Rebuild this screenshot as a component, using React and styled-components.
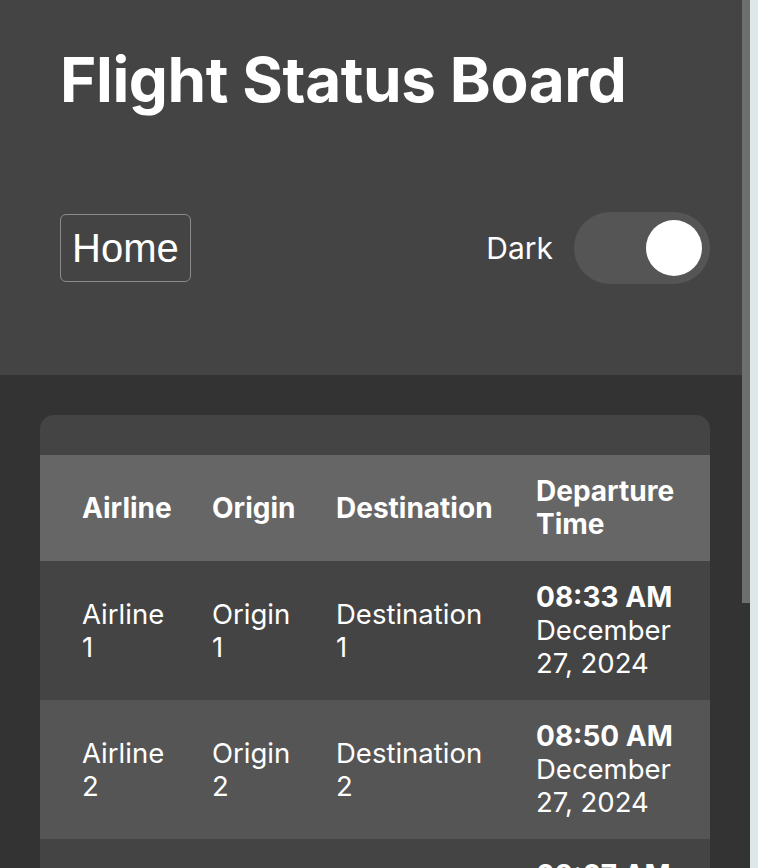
import { useEffect, useRef, useState } from "react";
import styled, { createGlobalStyle } from "styled-components";

const GlobalStyle = createGlobalStyle`
  html, body {
    margin: 0;
    padding: 0;
    background-color: #333333;
  }
  body {
    font-family: Inter, "Noto Sans", sans-serif;
    color: #fff;
  }
`;

const Page = styled.div`
  display: flex;
  height: 100vh;
  overflow: hidden;
`;

const Content = styled.div`
  flex: 1;
  min-width: 0;
  overflow-y: auto;
  scrollbar-width: none;
  &::-webkit-scrollbar {
    display: none;
  }
`;

const ScrollRail = styled.div`
  display: flex;
  width: 16px;
  flex-shrink: 0;
  background: linear-gradient(90deg, #333333 8px, #dfe6ea 8px);
`;

const ScrollThumb = styled.div`
  width: 8px;
  background-color: #6e6e6e;
`;

const Header = styled.header`
  background-color: #444444;
  padding: 41px 32px 91px 60px;
`;

const Title = styled.h1`
  margin: 0 0 94px;
  font-size: 62px;
  font-weight: 700;
  line-height: 77px;
  letter-spacing: -0.4px;
`;

const Nav = styled.nav`
  display: flex;
  align-items: center;
  justify-content: space-between;
`;

const HomeButton = styled.button`
  font-family: "Liberation Sans", Arial, sans-serif;
  font-size: 40px;
  color: #fff;
  background: transparent;
  border: 1px solid #8a8a8a;
  border-radius: 6px;
  padding: 9px 11px;
  line-height: 48px;
  cursor: pointer;
`;

const ThemeSwitch = styled.label`
  display: flex;
  align-items: center;
  gap: 21px;
  font-size: 30px;
  cursor: pointer;
`;

const Track = styled.span`
  display: flex;
  justify-content: ${(p) => (p.$on ? "flex-end" : "flex-start")};
  align-items: center;
  width: 136px;
  height: 72px;
  box-sizing: border-box;
  padding: 8px;
  border-radius: 36px;
  background-color: #555555;
`;

const Knob = styled.span`
  width: 56px;
  height: 56px;
  border-radius: 50%;
  background-color: #fff;
`;

const Main = styled.main`
  padding: 40px 32px 93px 40px;
`;

const Card = styled.section`
  background-color: #444444;
  border-radius: 14px;
  padding: 40px 0;
  overflow: hidden;
`;

const Table = styled.table`
  width: 100%;
  border-collapse: collapse;
  table-layout: fixed;
`;

const HeadRow = styled.tr`
  background-color: #666666;
`;

const Row = styled.tr`
  background-color: ${(p) => (p.$alt ? "#555555" : "#444444")};
`;

const Th = styled.th`
  box-sizing: border-box;
  width: ${(p) => p.$w || "auto"};
  padding: 20px 0 20px 42px;
  text-align: left;
  font-size: 28px;
  font-weight: 700;
  line-height: 33px;
  vertical-align: middle;
`;

const Td = styled.td`
  padding: 20px 0 20px 42px;
  font-size: 27.5px;
  line-height: 33px;
  vertical-align: middle;
`;

const DateCell = styled(Td)`
  padding-right: 20px;
`;

const Time = styled.strong`
  display: block;
  font-size: 28px;
  font-weight: 700;
`;

const flights = [
  { id: 1, time: "08:33 AM", date: "December 27, 2024" },
  { id: 2, time: "08:50 AM", date: "December 27, 2024" },
  { id: 3, time: "09:07 AM", date: "December 27, 2024" },
  { id: 4, time: "09:24 AM", date: "December 27, 2024" },
];

function App() {
  const [dark, setDark] = useState(true);
  const [thumb, setThumb] = useState({ top: 0, height: 0 });
  const contentRef = useRef(null);

  // the page's own scrollbar is hidden, so its thumb is drawn from the scroll values
  const updateThumb = () => {
    const el = contentRef.current;
    if (!el) return;
    const ratio = el.clientHeight / el.scrollHeight;
    setThumb({
      top: el.scrollTop * ratio,
      height: Math.min(1, ratio) * el.clientHeight,
    });
  };

  useEffect(() => {
    updateThumb();
    window.addEventListener("resize", updateThumb);
    return () => window.removeEventListener("resize", updateThumb);
  }, []);

  return (
    <Page>
      <GlobalStyle />
      <Content ref={contentRef} onScroll={updateThumb}>
        <Header>
          <Title>Flight Status Board</Title>
          <Nav>
            <HomeButton type="button">Home</HomeButton>
            <ThemeSwitch onClick={() => setDark(!dark)}>
              Dark
              <Track $on={dark}>
                <Knob />
              </Track>
            </ThemeSwitch>
          </Nav>
        </Header>
        <Main>
          <Card>
            <Table>
              <thead>
                <HeadRow>
                  <Th $w="130px">Airline</Th>
                  <Th $w="124px">Origin</Th>
                  <Th $w="200px">Destination</Th>
                  <Th>Departure Time</Th>
                </HeadRow>
              </thead>
              <tbody>
                {flights.map((f, i) => (
                  <Row key={f.id} $alt={i % 2 === 1}>
                    <Td>Airline {f.id}</Td>
                    <Td>Origin {f.id}</Td>
                    <Td>Destination {f.id}</Td>
                    <DateCell>
                      <Time>{f.time}</Time>
                      {f.date}
                    </DateCell>
                  </Row>
                ))}
              </tbody>
            </Table>
          </Card>
        </Main>
      </Content>
      <ScrollRail>
        <ScrollThumb style={{ marginTop: thumb.top, height: thumb.height }} />
      </ScrollRail>
    </Page>
  );
}

export default App;
